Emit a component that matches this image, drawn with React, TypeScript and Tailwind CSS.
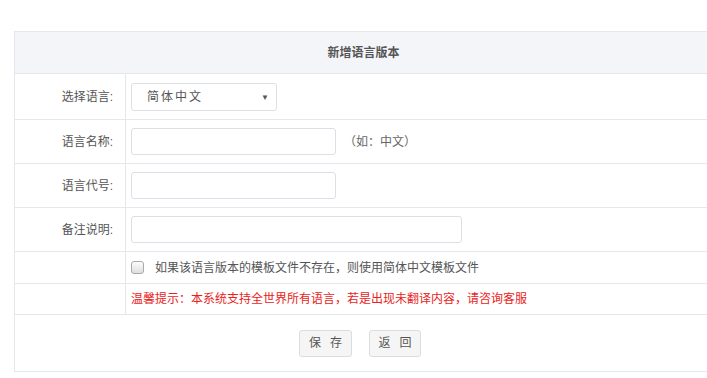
import React from 'react';

const font = { fontFamily: '"Liberation Sans", "Noto Sans CJK SC", sans-serif' };

function Row({ label, h, children }: { label?: string; h: string; children: React.ReactNode }) {
  return (
    <div className={`flex border-b border-[#e4e7ec] ${h}`}>
      <div className="flex w-[111px] shrink-0 items-center justify-end border-r border-[#e4e7ec] pr-[12px] text-[12px] text-[#555]">
        {label}
      </div>
      <div className="flex flex-1 items-center pl-[5px]">{children}</div>
    </div>
  );
}

function TextInput({ w }: { w: string }) {
  return <input type="text" className={`h-[27px] ${w} rounded-[3px] border border-[#dcdfe4] bg-white outline-none`} />;
}

function App() {
  return (
    <div className="h-[378px] w-[707px] overflow-hidden bg-white pl-[14px] pt-[31px]" style={font}>
      <div className="w-[700px] border-l border-t border-[#e4e7ec]">
        <div className="flex h-[42px] items-center justify-center border-b border-[#e4e7ec] bg-[#f4f5f9] pr-[2px] text-[12px] font-bold text-[#555]">
          新增语言版本
        </div>

        <Row label="选择语言:" h="h-[46px]">
          <div className="relative flex h-[28px] w-[146px] items-center rounded-[3px] border border-[#dcdfe4] bg-white pl-[15px] text-[12px] tracking-[2px] text-[#555]">
            简体中文
            <span className="absolute right-[5px] top-[8px] text-[8px] text-[#555]">▼</span>
          </div>
        </Row>

        <Row label="语言名称:" h="h-[44px]">
          <TextInput w="w-[205px]" />
          <span className="ml-[8px] text-[12px] text-[#666]">（如：中文）</span>
        </Row>

        <Row label="语言代号:" h="h-[44px]">
          <TextInput w="w-[205px]" />
        </Row>

        <Row label="备注说明:" h="h-[44px]">
          <TextInput w="w-[331px]" />
        </Row>

        <Row h="h-[32px]">
          <span className="h-[13px] w-[13px] rounded-[3px] border border-[#aaa] bg-gradient-to-b from-[#fcfcfc] to-[#dedede]" />
          <span className="ml-[11px] text-[12px] text-[#555]">如果该语言版本的模板文件不存在，则使用简体中文模板文件</span>
        </Row>

        <Row h="h-[31px]">
          <span className="text-[12px] text-[#e8231b]">温馨提示：本系统支持全世界所有语言，若是出现未翻译内容，请咨询客服</span>
        </Row>

        <div className="flex h-[57px] items-center justify-center gap-[17px] border-b border-[#e4e7ec] pr-[9px]">
          <button type="button" className="flex h-[27px] w-[53px] items-center justify-center gap-[9px] rounded-[3px] border border-[#dcdcdc] bg-[#f5f5f5] text-[12px] text-[#555]">
            <span>保</span>
            <span>存</span>
          </button>
          <button type="button" className="flex h-[27px] w-[52px] items-center justify-center gap-[9px] rounded-[3px] border border-[#dcdcdc] bg-[#f5f5f5] text-[12px] text-[#555]">
            <span>返</span>
            <span>回</span>
          </button>
        </div>
      </div>
    </div>
  );
}

export default App;
